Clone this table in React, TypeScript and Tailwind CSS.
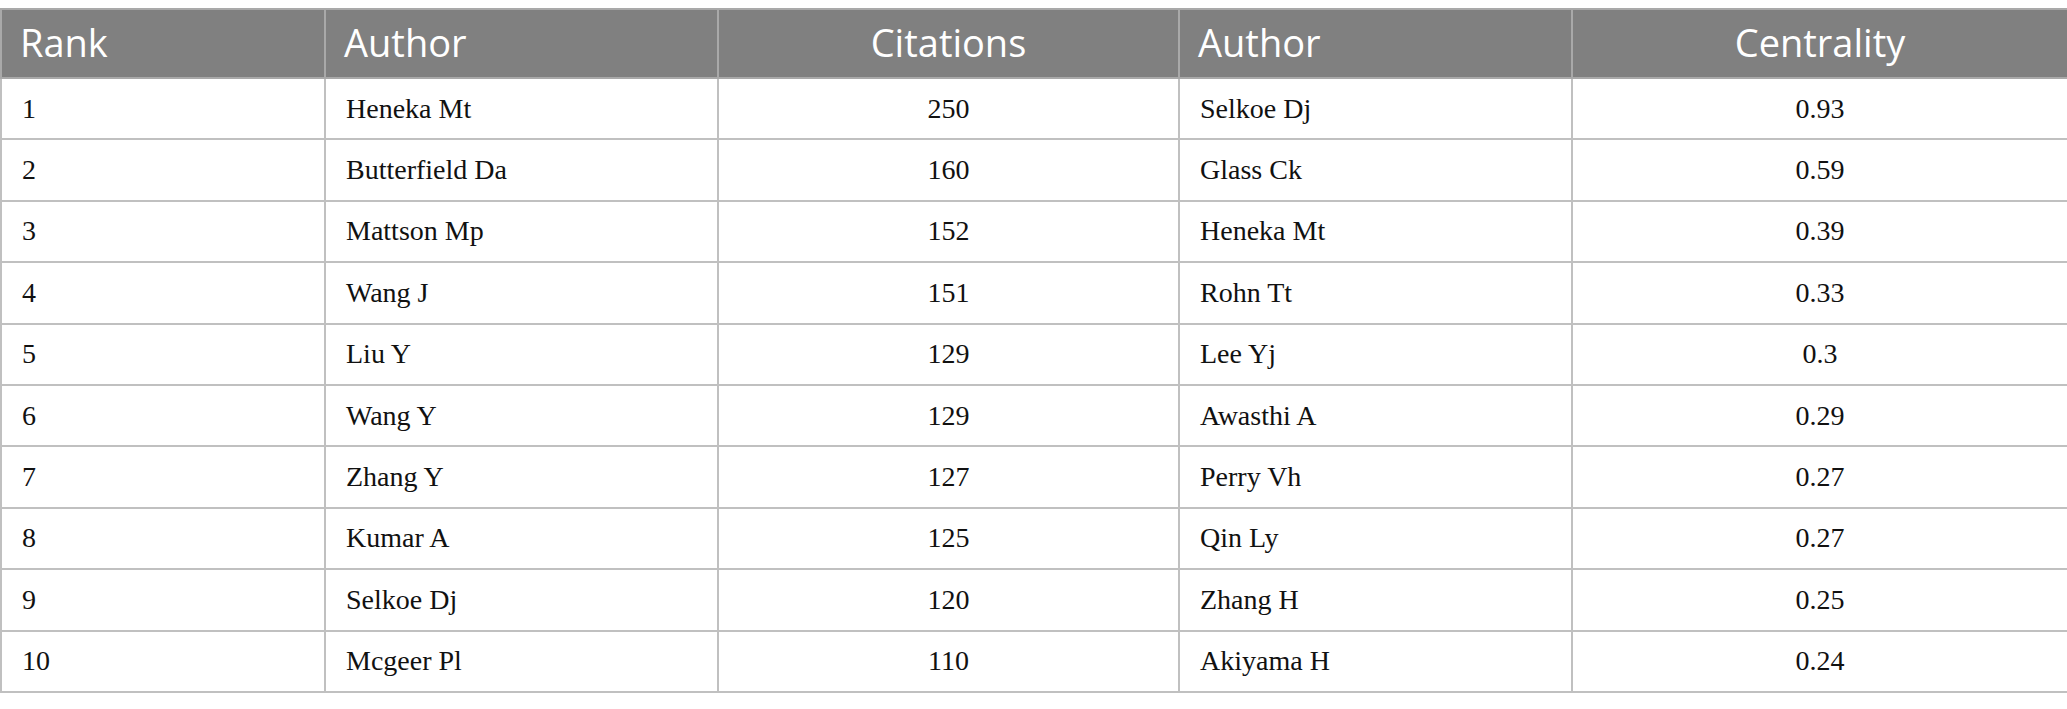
import React from "react";

const rows: [string, string, string, string, string][] = [
  ["1", "Heneka Mt", "250", "Selkoe Dj", "0.93"],
  ["2", "Butterfield Da", "160", "Glass Ck", "0.59"],
  ["3", "Mattson Mp", "152", "Heneka Mt", "0.39"],
  ["4", "Wang J", "151", "Rohn Tt", "0.33"],
  ["5", "Liu Y", "129", "Lee Yj", "0.3"],
  ["6", "Wang Y", "129", "Awasthi A", "0.29"],
  ["7", "Zhang Y", "127", "Perry Vh", "0.27"],
  ["8", "Kumar A", "125", "Qin Ly", "0.27"],
  ["9", "Selkoe Dj", "120", "Zhang H", "0.25"],
  ["10", "Mcgeer Pl", "110", "Akiyama H", "0.24"],
];

export default function App() {
  return (
    <div className="w-[2067px] h-[709px] bg-white pt-[8px]">
      <table className="w-[2067px] border-collapse table-fixed">
        <colgroup>
          <col className="w-[324px]" />
          <col className="w-[393px]" />
          <col className="w-[461px]" />
          <col className="w-[393px]" />
          <col className="w-[496px]" />
        </colgroup>
        <thead>
          <tr className="h-[69px] bg-[#808080] text-white font-['Open_Sans',sans-serif] text-[38px]">
            <th className="border-2 border-[#a9a9a9] text-left font-normal pl-[18px] pb-[2px]">Rank</th>
            <th className="border-2 border-[#a9a9a9] text-left font-normal pl-[18px] pb-[2px]">Author</th>
            <th className="border-2 border-[#a9a9a9] text-center font-normal pb-[2px]">Citations</th>
            <th className="border-2 border-[#a9a9a9] text-left font-normal pl-[18px] pb-[2px]">Author</th>
            <th className="border-2 border-[#a9a9a9] text-center font-normal pb-[2px]">Centrality</th>
          </tr>
        </thead>
        <tbody className="font-['Liberation_Serif',serif] text-[28px] text-[#111]">
          {rows.map((r) => (
            <tr key={r[0]} className="h-[61.4px]">
              <td className="border-2 border-[#c0c0c0] pl-[20px]">{r[0]}</td>
              <td className="border-2 border-[#c0c0c0] pl-[20px]">{r[1]}</td>
              <td className="border-2 border-[#c0c0c0] text-center">{r[2]}</td>
              <td className="border-2 border-[#c0c0c0] pl-[20px]">{r[3]}</td>
              <td className="border-2 border-[#c0c0c0] text-center">{r[4]}</td>
            </tr>
          ))}
        </tbody>
      </table>
    </div>
  );
}
